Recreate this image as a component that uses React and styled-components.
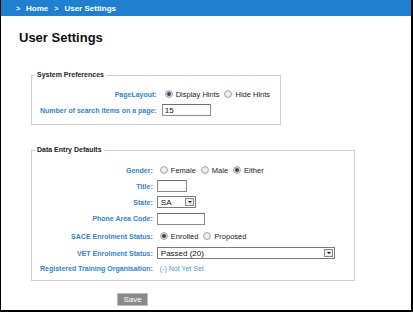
import styled, { createGlobalStyle } from "styled-components"

const GlobalStyle = createGlobalStyle`
  html, body {
    margin: 0;
    padding: 0;
    background: #fff;
  }
  body {
    font-family: "Liberation Sans", Arial, sans-serif;
  }
`

const App = () => {
  return (
    <>
      <GlobalStyle />
      <Frame>
        <TopBar>
          <Crumb>&gt;</Crumb>
          <CrumbLink>Home</CrumbLink>
          <Crumb>&gt;</Crumb>
          <CrumbLink>User Settings</CrumbLink>
        </TopBar>

        <Title>User Settings</Title>

        <Fieldset $width={250} $top={25}>
          <Legend>System Preferences</Legend>
          <Form $pt={7} $pb={6} $gap={5} $rows="16px 16px">
            <Label>PageLayout:</Label>
            <Value>
              <Radio $checked />
              <Option>Display Hints</Option>
              <Radio />
              <Option>Hide Hints</Option>
            </Value>
            <Label>Number of search items on a page:</Label>
            <Value>
              <TextBox $width={49} defaultValue="15" />
            </Value>
          </Form>
        </Fieldset>

        <Fieldset $width={324} $top={21}>
          <Legend>Data Entry Defaults</Legend>
          <Form
            $pt={8}
            $pb={4}
            $gap={4}
            $rows="16px 16px 16px 17px 18px 16px 15px"
          >
            <Label>Gender:</Label>
            <Value>
              <Radio />
              <Option>Female</Option>
              <Radio />
              <Option>Male</Option>
              <Radio $checked />
              <Option>Either</Option>
            </Value>

            <Label>Title:</Label>
            <Value>
              <TextBox $width={30} />
            </Value>

            <Label>State:</Label>
            <Value>
              <Select $width={39}>
                <span>SA</span>
                <Arrow />
              </Select>
            </Value>

            <Label>Phone Area Code:</Label>
            <Value>
              <TextBox $width={48} />
            </Value>

            <Label>SACE Enrolment Status:</Label>
            <Value>
              <Radio $checked />
              <Option>Enrolled</Option>
              <Radio />
              <Option>Proposed</Option>
            </Value>

            <Label>VET Enrolment Status:</Label>
            <Value>
              <Select $width={178}>
                <span>Passed (20)</span>
                <Arrow />
              </Select>
            </Value>

            <Label>Registered Training Organisation:</Label>
            <Value>
              <Link>(-) Not Yet Set</Link>
            </Value>
          </Form>
        </Fieldset>

        <Actions>
          <SaveButton>Save</SaveButton>
        </Actions>
      </Frame>
    </>
  )
}

const Frame = styled.div`
  width: 413px;
  height: 312px;
  box-sizing: border-box;
  border-left: 1px solid #000;
  border-right: 2px solid #000;
  border-bottom: 2px solid #000;
  overflow: hidden;
  background: #fff;
`

const TopBar = styled.div`
  height: 16px;
  background: #1f80cf;
  display: flex;
  align-items: center;
  padding-left: 15px;
  color: #fff;
  font-weight: bold;
  font-size: 8px;
`

const Crumb = styled.span`
  font-size: 7px;
  margin-right: 6px;
`

const CrumbLink = styled.span`
  margin-right: 6px;
`

const Title = styled.h1`
  margin: 14px 0 0 18px;
  font-size: 13px;
  line-height: 16px;
  font-weight: bold;
  color: #111;
`

const Fieldset = styled.fieldset`
  margin: ${({ $top }) => $top}px 0 0 30px;
  width: ${({ $width }) => $width}px;
  box-sizing: border-box;
  padding: 0 8px;
  border: 1px solid #cfcfcf;
  min-width: 0;
`

const Legend = styled.legend`
  margin-left: -5px;
  padding: 0 2px;
  font-size: 7px;
  line-height: 8px;
  font-weight: bold;
  color: #222;
`

const Form = styled.div`
  display: grid;
  grid-template-columns: auto 1fr;
  grid-template-rows: ${({ $rows }) => $rows};
  column-gap: ${({ $gap }) => $gap}px;
  padding-top: ${({ $pt }) => $pt}px;
  padding-bottom: ${({ $pb }) => $pb}px;
  align-items: center;
`

const Label = styled.div`
  text-align: right;
  font-size: 7px;
  font-weight: bold;
  color: #3585c8;
  white-space: nowrap;
`

const Value = styled.div`
  display: flex;
  align-items: center;
  font-size: 7.5px;
  color: #222;
`

const Radio = styled.span`
  width: 6px;
  height: 6px;
  margin: 0 3px 0 3px;
  border-radius: 50%;
  border: 1px solid #a8a8a8;
  background: ${({ $checked }) =>
    $checked
      ? "radial-gradient(circle, #2d3f55 0, #3c4e66 35%, #c9d0d8 55%, #eee 100%)"
      : "radial-gradient(circle, #f4f4f4 0, #dedede 100%)"};
  flex: none;
`

const Option = styled.span`
  margin-right: 2px;
  white-space: nowrap;
`

const TextBox = styled.input`
  width: ${({ $width }) => $width}px;
  height: 12px;
  box-sizing: border-box;
  margin: 0;
  padding: 0 2px;
  border: 1px solid #8c8c8c;
  border-top-color: #6e6e6e;
  font-family: "Liberation Sans", Arial, sans-serif;
  font-size: 8px;
  color: #111;
  outline: none;
`

const Select = styled.div`
  width: ${({ $width }) => $width}px;
  height: 12px;
  box-sizing: border-box;
  border: 1px solid #7c7c7c;
  display: flex;
  align-items: center;
  justify-content: space-between;
  padding: 0 1px 0 3px;
  font-size: 8px;
  color: #111;
  background: #fff;
`

const Arrow = styled.span`
  width: 9px;
  height: 8px;
  box-sizing: border-box;
  border: 1px solid #8a8a8a;
  background: #ececec;
  position: relative;
  &::after {
    content: "";
    position: absolute;
    left: 2px;
    top: 2px;
    border-left: 2px solid transparent;
    border-right: 2px solid transparent;
    border-top: 2px solid #111;
  }
`

const Link = styled.span`
  color: #4a9bdc;
  font-size: 7px;
  margin-left: 3px;
`

const Actions = styled.div`
  display: flex;
  padding: 12px 0 0 116px;
`

const SaveButton = styled.button`
  width: 31px;
  height: 13px;
  padding: 0;
  border: 1px solid #bdbdbd;
  background: #8a8a8a;
  color: #fff;
  font-family: "Liberation Sans", Arial, sans-serif;
  font-size: 8px;
  line-height: 11px;
`

export default App
